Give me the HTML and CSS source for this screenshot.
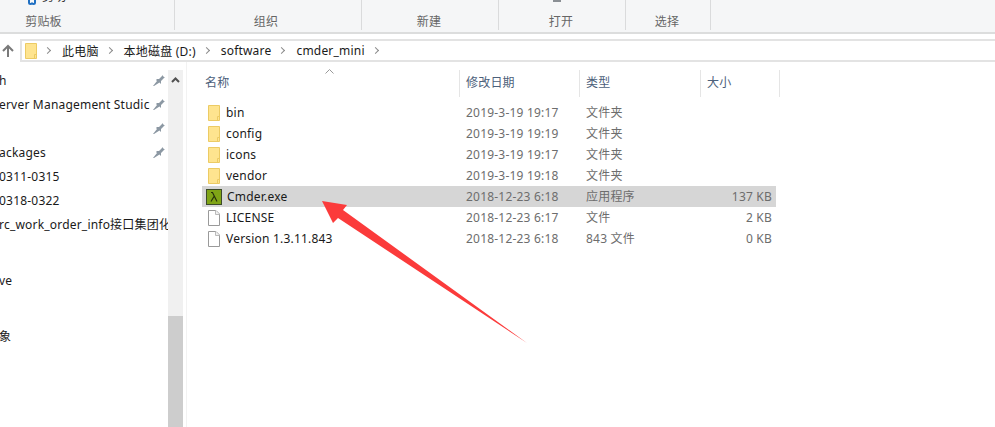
FILE: index.html
```html
<!DOCTYPE html>
<html lang="zh-CN">
<head>
    <meta charset="UTF-8">
    <meta name="viewport" content="width=device-width, initial-scale=1.0">
    <title>cmder_mini</title>
    <link rel="stylesheet" href="styles.css">
</head>
<body>

<svg width="0" height="0" class="defs">
    <symbol id="folder" viewBox="0 0 12 16">
        <path d="M.5.5h11v15H.5z" fill="#fee48f" stroke="#eccb64"/>
        <path d="M9.5 15.5v-4h2" fill="none" stroke="#eccb64"/>
    </symbol>
    <symbol id="doc" viewBox="0 0 12 16">
        <path d="M.5.5h7.5l3.5 3.5v11.500H.5z" fill="#fff" stroke="#9a9a9a"/>
        <path d="M7.500.5v4h4" fill="#f0f0f0" stroke="#bbb"/>
    </symbol>
    <symbol id="pin" viewBox="0 0 12 12">
        <path d="M0 12l4-5-1-1 1-1 2 0 3-3V1l3 3-1 0-3 3v2L8 10 6.500 8.500 1 12z" fill="#8c98a3"/>
    </symbol>
</svg>

<div class="ribbon">
    <div class="ribbon-group group-clip">
        <div class="cut-row">
            <svg class="cut-icon" width="12" height="5" viewBox="0 0 12 5"><path d="M3 0v2.500a1.500 1.500 0 0 0 3 0M9 0v2.500a1.500 1.500 0 0 1-3 0" fill="none" stroke="#1f6fc2" stroke-width="2"/></svg>
            <span class="cut-text">剪切</span>
        </div>
        <span>剪贴板</span>
    </div>
    <div class="ribbon-group group-org"><span>组织</span></div>
    <div class="ribbon-group group-new"><span>新建</span></div>
    <div class="ribbon-group group-open"><i class="open-stub"></i><span>打开</span></div>
    <div class="ribbon-group group-select"><span>选择</span></div>
</div>

<div class="nav">
    <svg class="up-arrow" width="14" height="14" viewBox="0 0 14 14"><path d="M7 13V2M2 7l5-5 5 5" fill="none" stroke="#7a7a7a" stroke-width="2"/></svg>
    <div class="address">
        <svg class="addr-folder" width="12" height="16"><use href="#folder"/></svg>
        <span class="crumb-sep"></span>
        <span class="crumb">此电脑</span>
        <span class="crumb-sep"></span>
        <span class="crumb">本地磁盘 (D:)</span>
        <span class="crumb-sep"></span>
        <span class="crumb">software</span>
        <span class="crumb-sep"></span>
        <span class="crumb">cmder_mini</span>
        <span class="crumb-sep"></span>
    </div>
</div>

<div class="content">
    <div class="sidebar">
        <ul class="quick">
            <li><span>h</span><svg width="12" height="12"><use href="#pin"/></svg></li>
            <li><span>erver Management Studic</span><svg width="12" height="12"><use href="#pin"/></svg></li>
            <li><span></span><svg width="12" height="12"><use href="#pin"/></svg></li>
            <li><span>ackages</span><svg width="12" height="12"><use href="#pin"/></svg></li>
            <li><span>0311-0315</span></li>
            <li><span>0318-0322</span></li>
            <li><span>rc_work_order_info接口集团化</span></li>
            <li class="gap"><span>ve</span></li>
            <li class="gap"><span>象</span></li>
        </ul>
        <div class="scrollbar">
            <svg class="scroll-up" width="9" height="6" viewBox="0 0 9 6"><path d="M1 5l3.500-3.500L8 5" fill="none" stroke="#505050" stroke-width="2"/></svg>
            <div class="thumb"></div>
        </div>
    </div>

    <div class="list">
        <svg class="sort-caret" width="9" height="5" viewBox="0 0 9 5"><path d="M.5 4.500l4-4 4 4" fill="none" stroke="#999"/></svg>
        <div class="list-head">
            <div class="col col-name">名称</div>
            <div class="col col-date">修改日期</div>
            <div class="col col-type">类型</div>
            <div class="col col-size">大小</div>
        </div>
        <div class="row">
            <div class="col-name cell-name"><svg width="12" height="16"><use href="#folder"/></svg>bin</div>
            <div class="col-date cell">2019-3-19 19:17</div>
            <div class="col-type cell">文件夹</div>
        </div>
        <div class="row">
            <div class="col-name cell-name"><svg width="12" height="16"><use href="#folder"/></svg>config</div>
            <div class="col-date cell">2019-3-19 19:19</div>
            <div class="col-type cell">文件夹</div>
        </div>
        <div class="row">
            <div class="col-name cell-name"><svg width="12" height="16"><use href="#folder"/></svg>icons</div>
            <div class="col-date cell">2019-3-19 19:17</div>
            <div class="col-type cell">文件夹</div>
        </div>
        <div class="row">
            <div class="col-name cell-name"><svg width="12" height="16"><use href="#folder"/></svg>vendor</div>
            <div class="col-date cell">2019-3-19 19:18</div>
            <div class="col-type cell">文件夹</div>
        </div>
        <div class="row selected">
            <div class="col-name cell-name">
                <svg class="exe-icon" width="16" height="16" viewBox="0 0 16 16"><rect x=".5" y=".5" width="15" height="15" fill="#7fa416" stroke="#3c4a2a"/><path d="M5 3.500h1.500L11 12.500M8 7.500L5 12.500" fill="none" stroke="#26300c" stroke-width="1.200"/></svg>
                Cmder.exe
            </div>
            <div class="col-date cell">2018-12-23 6:18</div>
            <div class="col-type cell">应用程序</div>
            <div class="col-size cell">137 KB</div>
        </div>
        <div class="row">
            <div class="col-name cell-name"><svg width="12" height="16"><use href="#doc"/></svg>LICENSE</div>
            <div class="col-date cell">2018-12-23 6:17</div>
            <div class="col-type cell">文件</div>
            <div class="col-size cell">2 KB</div>
        </div>
        <div class="row">
            <div class="col-name cell-name"><svg width="12" height="16"><use href="#doc"/></svg>Version 1.3.11.843</div>
            <div class="col-date cell">2018-12-23 6:18</div>
            <div class="col-type cell">843 文件</div>
            <div class="col-size cell">0 KB</div>
        </div>
    </div>
</div>

<!-- red annotation arrow drawn over the window -->
<svg class="arrow" width="995" height="427" viewBox="0 0 995 427">
    <path d="M322 201L347 205 343 210 527 343 338 218 333 223z" fill="#fb3b3b"/>
</svg>

</body>
</html>
```

FILE: styles.css
```css
* {
    box-sizing: border-box;
}

html, body {
    margin: 0;
    height: 427px;
    overflow: hidden;
}

body {
    position: relative;
    background: #fff;
    font-family: "Noto Sans", "Noto Sans CJK SC", sans-serif;
    font-size: 12px;
    letter-spacing: .2px;
    color: #1a1a1a;
}

.defs {
    display: block;
    height: 0;
}

/* ribbon */
.ribbon {
    display: flex;
    height: 34px;
    background: #f5f6f7;
    border-bottom: 2px solid #dcdddd;
    color: #666;
}

.ribbon-group {
    position: relative;
    height: 30px;
    border-right: 1px solid #dadbdc;
    text-align: center;
    padding-top: 13px;
    line-height: 18px;
}

.group-clip { width: 175px; padding-right: 87px; }
.group-org { width: 187px; padding-right: 4px; }
.group-new { width: 137px; padding-right: 2px; }
.group-open { width: 127px; padding-right: 2px; }
.group-select { width: 85px; padding-right: 2px; }

.cut-row {
    position: absolute;
    top: -12px;
    left: 26px;
    display: flex;
    gap: 4px;
    color: #333;
}

.cut-icon {
    margin-top: 12px;
}

.open-stub {
    position: absolute;
    left: 54px;
    top: 0;
    width: 8px;
    height: 2px;
    background: #8a8f94;
}

/* address bar */
.nav {
    display: flex;
    align-items: center;
    height: 23px;
    margin-top: 5px;
}

.up-arrow {
    margin: 0 5px 0 1px;
}

.address {
    flex: 1;
    display: flex;
    align-items: center;
    height: 23px;
    padding-left: 3px;
    border: 2px solid #e3e3e3;
    border-right: 0;
}

.crumb {
    color: #1a1a1a;
}

.crumb-sep {
    width: 5px;
    height: 5px;
    margin: 0 12px 0 8px;
    border-top: 1.500px solid #8a8a8a;
    border-right: 1.500px solid #8a8a8a;
    transform: rotate(45deg);
}

/* main area */
.content {
    display: flex;
    height: 365px;
}

.sidebar {
    display: flex;
    width: 187px;
    flex: none;
    border-right: 1px solid #f2f2f2;
}

.quick {
    width: 168px;
    margin: 0;
    padding: 6px 0 0;
    list-style: none;
    overflow: hidden;
}

.quick li {
    display: flex;
    align-items: center;
    height: 24px;
    white-space: nowrap;
}

.quick li span {
    flex: 1;
    margin-left: -1px;
    overflow: hidden;
}

.quick li svg {
    flex: none;
    margin-right: 3px;
}

.quick li.gap {
    margin-top: 32px;
}

.scrollbar {
    position: relative;
    width: 15px;
    margin-top: 8px;
    background: #f0f0f0;
}

.scroll-up {
    position: absolute;
    top: 7px;
    left: 3px;
}

.thumb {
    position: absolute;
    left: 0;
    right: 0;
    top: 246px;
    bottom: 0;
    background: #cdcdcd;
}

/* file list */
.list {
    position: relative;
    flex: 1;
    padding: 8px 0 0 15px;
}

.sort-caret {
    position: absolute;
    left: 138px;
    top: 7px;
}

.list-head {
    display: flex;
    height: 27px;
    margin-bottom: 5px;
    color: #4c607a;
}

.col {
    height: 27px;
    line-height: 25px;
    border-right: 1px solid #e5e5e5;
}

.col-name { width: 258px; padding-left: 3px; flex: none; }
.col-date { width: 120px; padding-left: 6px; flex: none; }
.col-type { width: 121px; padding-left: 6px; flex: none; }
.col-size { width: 79px; padding-left: 6px; flex: none; }

.row {
    display: flex;
    height: 21px;
    width: 574px;
    line-height: 21px;
}

.row.selected {
    background: #d6d6d6;
}

.cell-name {
    display: flex;
    align-items: center;
    gap: 6px;
    padding-left: 6px;
}

.cell-name .exe-icon {
    margin-left: -2px;
    margin-right: -1px;
}

.cell {
    color: #6d6d6d;
}

.col-size.cell {
    width: 75px;
    text-align: right;
    padding: 0 4px 0 0;
}

.arrow {
    position: absolute;
    left: 0;
    top: 0;
    pointer-events: none;
}
```
